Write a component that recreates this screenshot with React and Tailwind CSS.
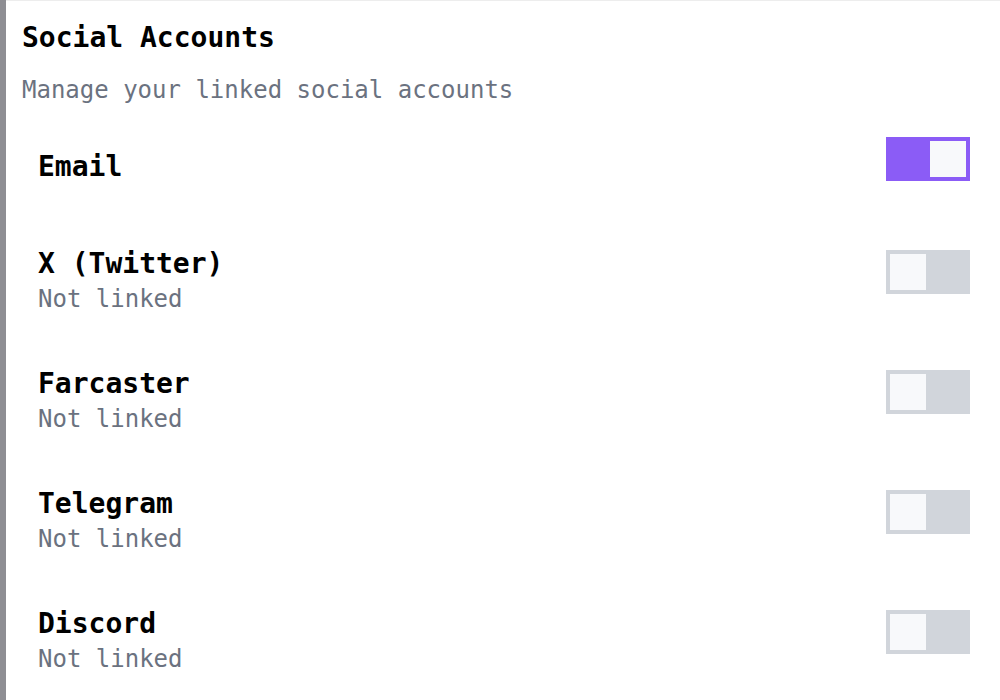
import React, { useState } from 'react';

const accounts = [
  { id: 'email', name: 'Email', linked: true },
  { id: 'x', name: 'X (Twitter)', linked: false },
  { id: 'farcaster', name: 'Farcaster', linked: false },
  { id: 'telegram', name: 'Telegram', linked: false },
  { id: 'discord', name: 'Discord', linked: false },
];

function Toggle({ on, onClick }) {
  return (
    <button
      onClick={onClick}
      className={`w-[84px] h-[44px] p-[4px] flex shrink-0 ${on ? 'bg-[#8b5cf6] justify-end' : 'bg-[#d1d5db] justify-start'}`}
    >
      <span className="block w-[36px] h-[36px] bg-[#f8f9fb]" />
    </button>
  );
}

export default function App() {
  const [state, setState] = useState(Object.fromEntries(accounts.map(a => [a.id, a.linked])));

  return (
    <div className="min-h-screen h-[700px] flex bg-white text-black overflow-hidden" style={{ fontFamily: '"DejaVu Sans Mono", "Liberation Mono", monospace' }}>
      <div className="w-[6px] bg-[#8e8e93] shrink-0" />
      <div className="flex-1 border-t border-[#ededed] pt-[19px] pl-[16px] pr-[30px]">
        <h2 className="text-[28px] leading-[36px] font-bold">Social Accounts</h2>
        <p className="mt-[18px] text-[24px] leading-[32px] text-[#6b7280]">Manage your linked social accounts</p>

        <div className="mt-[31px] pl-[16px]">
          {accounts.map((a, i) => (
            <div
              key={a.id}
              className={`flex justify-between items-start ${i === 0 ? 'h-[107px]' : 'h-[120px]'}`}
            >
              <div className={i === 0 ? 'pt-[12px]' : 'pt-[2px]'}>
                <div className="text-[28px] leading-[36px] font-bold">{a.name}</div>
                {i > 0 && (
                  <div className="mt-[1px] text-[24px] leading-[32px] text-[#6b7280]">
                    {state[a.id] ? 'Linked' : 'Not linked'}
                  </div>
                )}
              </div>
              <div className={i === 0 ? '' : 'pt-[6px]'}>
                <Toggle on={state[a.id]} onClick={() => setState({ ...state, [a.id]: !state[a.id] })} />
              </div>
            </div>
          ))}
        </div>
      </div>
    </div>
  );
}
